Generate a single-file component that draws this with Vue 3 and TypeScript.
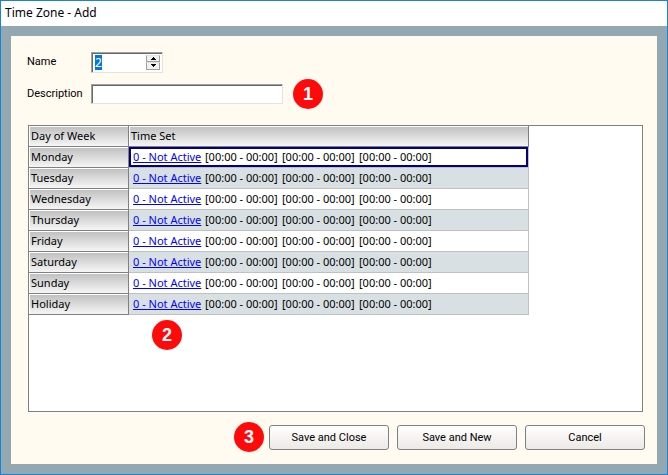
<script setup lang="ts">
import { onMounted, ref } from 'vue'

interface DayRow {
  day: string
  timeSet: string
  slots: string[]
}

const days = ['Monday', 'Tuesday', 'Wednesday', 'Thursday', 'Friday', 'Saturday', 'Sunday', 'Holiday']
const rows: DayRow[] = days.map((day) => ({
  day,
  timeSet: '0 - Not Active',
  slots: ['[00:00 - 00:00]', '[00:00 - 00:00]', '[00:00 - 00:00]'],
}))

const name = ref('2')
const description = ref('')
const selected = ref(0)
const nameInput = ref<HTMLInputElement | null>(null)

function step(delta: number) {
  name.value = String(Math.max(0, (Number(name.value) || 0) + delta))
}

onMounted(() => {
  nameInput.value?.focus()
  nameInput.value?.select()
})
</script>

<template>
  <div class="window">
    <header class="title">Time Zone - Add</header>
    <form class="panel" @submit.prevent>
      <div class="field">
        <label for="name">Name</label>
        <div class="spinner sunken">
          <input id="name" ref="nameInput" v-model="name" type="text" />
          <div class="steps">
            <button type="button" aria-label="Increase" @click="step(1)">
              <svg width="5" height="3" viewBox="0 0 5 3" shape-rendering="crispEdges"><path d="M2 0h1v1h1v1h1v1H0V2h1V1h1z" /></svg>
            </button>
            <button type="button" aria-label="Decrease" @click="step(-1)">
              <svg width="5" height="3" viewBox="0 0 5 3" shape-rendering="crispEdges"><path d="M0 0h5v1H4v1H3v1H2V2H1V1H0z" /></svg>
            </button>
          </div>
        </div>
      </div>
      <div class="field second">
        <label for="description">Description</label>
        <input id="description" v-model="description" class="description sunken" type="text" />
        <span class="badge">1</span>
      </div>

      <div class="grid">
        <table>
          <colgroup>
            <col class="day-col" />
            <col class="set-col" />
          </colgroup>
          <thead>
            <tr>
              <th scope="col">Day of Week</th>
              <th scope="col">Time Set</th>
            </tr>
          </thead>
          <tbody>
            <tr v-for="(row, i) in rows" :key="row.day" @click="selected = i">
              <th scope="row">{{ row.day }}</th>
              <td :class="{ selected: selected === i }">
                <div class="times">
                  <a href="#" @click.prevent>{{ row.timeSet }}</a>
                  <span v-for="(slot, s) in row.slots" :key="s">{{ slot }}</span>
                </div>
              </td>
            </tr>
          </tbody>
        </table>
        <span class="badge grid-badge">2</span>
      </div>

      <footer class="actions">
        <span class="badge">3</span>
        <button type="submit">Save and Close</button>
        <button type="button">Save and New</button>
        <button type="button">Cancel</button>
      </footer>
    </form>
  </div>
</template>

<style>
body {
  margin: 0;
}
</style>

<style scoped>
* {
  box-sizing: border-box;
}

.window {
  display: flex;
  flex-direction: column;
  min-height: 100vh;
  padding: 0 10px 10px;
  border: 1px solid #1883d7;
  background: #94a8b2;
  color: #000;
  font-family: Roboto, "Liberation Sans", sans-serif;
  font-size: 11px;
}

.title {
  height: 25px;
  margin: 0 -10px 10px;
  padding-left: 4px;
  background: #fff;
  font-family: "Noto Sans", sans-serif;
  font-size: 12px;
  line-height: 24px;
}

.panel {
  display: flex;
  flex: 1;
  flex-direction: column;
  padding: 16px 12px 12px 16px;
  background: #fffbf0;
}

.field {
  display: flex;
  align-items: center;
  height: 20px;
}

.field label {
  width: 64px;
  line-height: 20px;
}

.second {
  margin-top: 12px;
}

.sunken {
  border: 1px solid;
  border-color: #a0a0a0 #e3e3e3 #e3e3e3 #a0a0a0;
  background: #fff;
  box-shadow: inset 1px 1px #696969;
}

.spinner {
  display: flex;
  width: 72px;
  height: 21px;
  padding: 2px;
}

.spinner input {
  flex: 1;
  min-width: 0;
  height: 15px;
  padding: 0 0 0 1px;
  border: 0;
  outline: 0;
  background: transparent;
  font-family: "Noto Sans", sans-serif;
  font-size: 12px;
}

.spinner input::selection {
  background: #0078d7;
  color: #fff;
}

.steps {
  display: flex;
  flex-direction: column;
  width: 14px;
}

.steps button {
  display: flex;
  flex: 1;
  align-items: center;
  justify-content: center;
  min-height: 0;
  padding: 0;
  border: 1px solid #a0a0a0;
  border-top-color: #e3e3e3;
  background: #f0f0f0;
}

.description {
  width: 192px;
  height: 20px;
  padding: 0 4px;
  outline: 0;
  font: inherit;
}

.badge {
  display: flex;
  flex: none;
  align-items: center;
  justify-content: center;
  width: 30px;
  height: 30px;
  border-radius: 50%;
  background: #ff0a0a;
  color: #fff;
  font-family: "Liberation Sans", sans-serif;
  font-size: 18px;
  font-weight: 700;
  line-height: 30px;
}

.second .badge {
  margin-left: 10px;
}

.grid {
  position: relative;
  flex: 1;
  margin: 21px 2px 0 1px;
  border: 1px solid #808080;
  background: #fff;
  font-family: "Noto Sans", sans-serif;
  font-size: 11px;
}

table {
  width: 500px;
  max-width: 100%;
  border-spacing: 0;
  table-layout: fixed;
}

.day-col {
  width: 100px;
}

th,
td {
  height: 21px;
  padding: 0 2px;
  line-height: 18px;
  text-align: left;
  white-space: nowrap;
}

th {
  border-right: 1px solid #808080;
  border-bottom: 1px solid #808080;
  background: linear-gradient(#bebebe, #f6f6f6);
  box-shadow: inset 1px 1px #fff;
  font-weight: 400;
}

td {
  padding-left: 4px;
  border-right: 1px solid #c0c0c0;
  border-bottom: 1px solid #c0c0c0;
}

tbody tr:nth-child(even) td {
  background: #d8e0e3;
}

td.selected {
  box-shadow: inset 0 0 0 2px #000080;
}

.times {
  display: grid;
  grid-template-columns: 72px 77px 77px 77px;
}

.times a {
  color: #00f;
}

.grid-badge {
  position: absolute;
  top: 194px;
  left: 123px;
}

.actions {
  display: flex;
  align-items: center;
  justify-content: flex-end;
  gap: 8px;
  margin-top: 10px;
}

.actions .badge {
  margin-right: -3px;
}

.actions button {
  width: 120px;
  height: 25px;
  padding: 0;
  border: 1px solid #808080;
  border-radius: 3px;
  background: linear-gradient(#fff, #ece9e6);
  color: #000;
  font: inherit;
}
</style>
